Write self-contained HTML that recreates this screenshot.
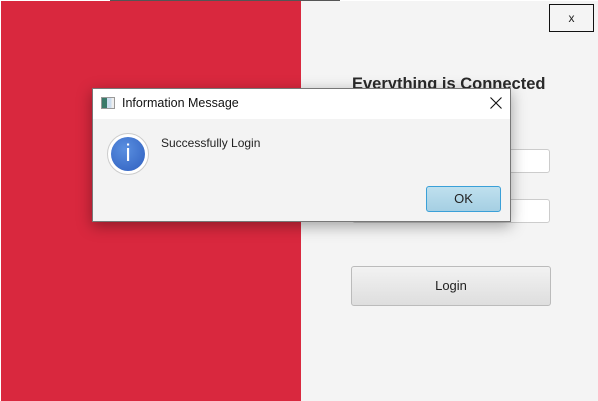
<!DOCTYPE html>
<html><head><meta charset="utf-8"><style>
*{margin:0;padding:0;box-sizing:border-box}
body{width:598px;height:401px;position:relative;overflow:hidden;background:#fff;font-family:"Liberation Sans",sans-serif}
.red{position:absolute;left:1px;top:1px;width:300px;height:400px;background:#d9283e}
.gray{position:absolute;left:301px;top:1px;width:297px;height:400px;background:#f4f4f4}
.strip{position:absolute;left:110px;top:0;width:230px;height:1px;background:#555}
.x{position:absolute;left:549px;top:4px;width:45px;height:28px;border:1px solid #111;background:#f4f4f4;font-size:12px;text-align:center;line-height:26px;color:#222}
.h{position:absolute;left:352px;top:75px;font-size:16.5px;font-weight:bold;color:#2a2a2a}
.in{position:absolute;left:352px;width:198px;height:24px;background:#fff;border:1px solid #ccc;border-radius:3px}
.login{position:absolute;left:351px;top:266px;width:200px;height:40px;border:1px solid #bbb;border-radius:3px;background:linear-gradient(#f2f2f2,#dedede);font-size:13px;text-align:center;line-height:38px;color:#222}
.dlg{position:absolute;left:92px;top:88px;width:419px;height:134px;border:1px solid #777;background:#f3f3f3;box-shadow:0 4px 14px rgba(0,0,0,.35)}
.tb{height:30px;background:#fff;position:relative}
.tb .ic{position:absolute;left:8px;top:8px;width:14px;height:12px;border:1px solid #999;background:linear-gradient(90deg,#3a7a6a 0 40%,#cde 40% 80%,#eee 80%)}
.tb .t{position:absolute;left:29px;top:7px;font-size:12.5px;color:#111}
.tb svg{position:absolute;left:397px;top:8px}
.circ{position:absolute;left:14px;top:44px;width:42px;height:42px;border-radius:50%;background:#fff;border:1px solid #ccc}
.circ div{position:absolute;left:3px;top:3px;width:34px;height:34px;border-radius:50%;background:radial-gradient(circle at 40% 35%,#5a8fe0,#2f5fbf);color:#fff;text-align:center;font-size:24px;line-height:34px}
.msg{position:absolute;left:68px;top:47px;font-size:12px;color:#222}
.ok{position:absolute;left:333px;top:97px;width:75px;height:26px;border:1px solid #3aa0d8;border-radius:3px;background:linear-gradient(#bfe0ee,#a5cfe3);font-size:13px;text-align:center;line-height:24px;color:#222}
</style></head><body>
<div class="red"></div><div class="gray"></div><div class="strip"></div>
<div class="x">x</div>
<div class="h">Everything is Connected</div>
<div class="in" style="top:149px"></div>
<div class="in" style="top:199px"></div>
<div class="login">Login</div>
<div class="dlg">
<div class="tb"><div class="ic"></div><div class="t">Information Message</div><svg width="12" height="12" viewBox="0 0 12 12"><path d="M0.5 0.5L11.5 11.5M11.5 0.5L0.5 11.5" stroke="#111" stroke-width="1.1" fill="none"/></svg></div>
<div class="circ"><div>i</div></div>
<div class="msg">Successfully Login</div>
<div class="ok">OK</div>
</div>
</body></html>
